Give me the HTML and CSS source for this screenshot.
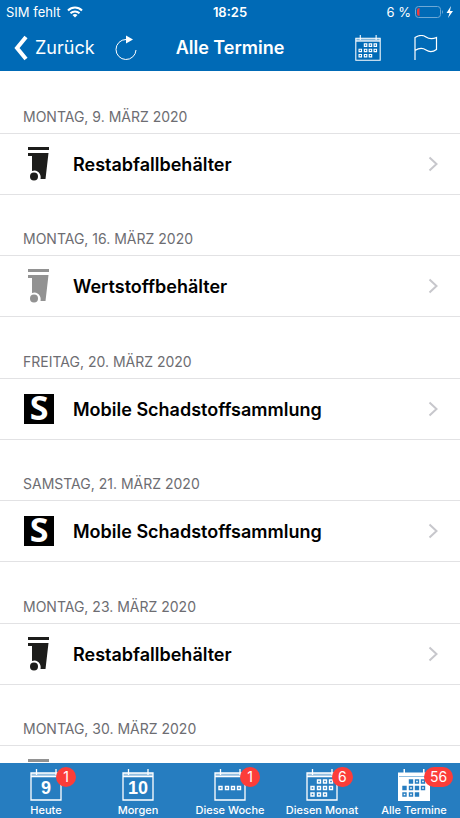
FILE: index.html
```html
<!DOCTYPE html>
<html lang="de">
<head>
    <meta charset="UTF-8">
    <meta name="viewport" content="width=device-width, initial-scale=1.0">
    <title>Alle Termine</title>
    <link rel="stylesheet" href="styles.css">
</head>
<body>
    <!-- shared shapes -->
    <svg class="sprite" aria-hidden="true">
        <symbol id="bin" viewBox="0 0 22 34">
            <path fill="currentColor" d="M0 0H21V3H0zM0 6H20.5L17.5 32H12.5C13.5 28 11 24 6.500 23.5L4 24V9H0z"/>
            <circle cx="6" cy="29.5" r="4" fill="currentColor"/>
        </symbol>
        <symbol id="next" viewBox="0 0 10 16">
            <path d="M1.5 1.5L8.5 8L1.5 14.5" fill="none" stroke="currentColor" stroke-width="2"/>
        </symbol>
        <symbol id="frame" viewBox="0 0 32 32">
            <path d="M1 4H31V31H1zM1 7.5H31M6.5 0V6M26 0V6" fill="none" stroke="currentColor" stroke-width="1.3"/>
            <path d="M1 4H31V8H1z" fill="currentColor" opacity="0.5"/>
        </symbol>
        <symbol id="days" viewBox="0 0 32 32">
            <path d="M11.5 11h3v3h-3zM17.5 11h3v3h-3zM23.5 11h3v3h-3zM5 17.5h3v3h-3zM11.5 17.5h3v3h-3zM17.5 17.5h3v3h-3zM23.5 17.5h3v3h-3zM5 24h3v3h-3zM11.5 24h3v3h-3zM17.5 24h3v3h-3z" fill="none" stroke="currentColor" stroke-width="1.4"/>
        </symbol>
    </svg>

    <header class="top">
        <div class="status">
            <div class="status-left">
                <span>SIM fehlt</span>
                <svg class="wifi" viewBox="0 0 16 12" fill="none" stroke="currentColor" stroke-width="2">
                    <path d="M1 4.5C5 0.5 11 0.5 15 4.5M3.5 7.2C6 4.8 10 4.8 12.5 7.2"/>
                    <path d="M5.5 9Q8 7 10.5 9L8 11.5z" fill="currentColor" stroke="none"/>
                </svg>
            </div>
            <span class="time">18:25</span>
            <div class="status-right">
                <span>6 %</span>
                <svg class="battery" viewBox="0 0 39 14">
                    <rect x="0.5" y="1.5" width="25" height="11" rx="3" fill="none" stroke="#6ea9d6"/>
                    <path d="M27 5Q29 7 27 9z" fill="#6ea9d6"/>
                    <path d="M4.5 3V11Q2 11 2 8.5V5.5Q2 3 4.5 3z" fill="#f03b3c"/>
                    <path d="M36 1L31.5 8H34.5L33 13L38 6H35z" fill="currentColor"/>
                </svg>
            </div>
        </div>
        <nav class="nav">
            <div class="nav-left">
                <button class="back">
                    <svg viewBox="0 0 14 26"><path d="M12 2L3 13L12 24" fill="none" stroke="currentColor" stroke-width="4"/></svg>
                    <span>Zurück</span>
                </button>
                <button class="icon-button" aria-label="Aktualisieren">
                    <svg class="reload" viewBox="0 0 22 26">
                        <path d="M11 4.5A10 10 0 1 0 21 15" fill="none" stroke="currentColor"/>
                        <path d="M11 0.5V8.5L18 4.5z" fill="currentColor"/>
                    </svg>
                </button>
            </div>
            <h1>Alle Termine</h1>
            <div class="nav-right">
                <button class="icon-button" aria-label="Kalender">
                    <svg class="calendar"><use href="#frame"/><use href="#days"/></svg>
                </button>
                <button class="icon-button" aria-label="Markieren">
                    <svg class="flag" viewBox="0 0 24 26">
                        <path d="M1 25V2.5C5 0 9 0 12 2C15 4 19 4 22.5 2.5V14.5C19 17 15 17 12 15C9 13 5 13 1 15.5" fill="none" stroke="currentColor" stroke-width="1.2"/>
                    </svg>
                </button>
            </div>
        </nav>
    </header>

    <main class="list">
        <section>
            <h2>MONTAG, 9. MÄRZ 2020</h2>
            <a class="row" href="#">
                <span class="icon"><svg class="bin"><use href="#bin"/></svg></span>
                <span class="name">Restabfallbehälter</span>
                <svg class="next"><use href="#next"/></svg>
            </a>
        </section>
        <section>
            <h2>MONTAG, 16. MÄRZ 2020</h2>
            <a class="row" href="#">
                <span class="icon"><svg class="bin grey"><use href="#bin"/></svg></span>
                <span class="name">Wertstoffbehälter</span>
                <svg class="next"><use href="#next"/></svg>
            </a>
        </section>
        <section>
            <h2>FREITAG, 20. MÄRZ 2020</h2>
            <a class="row" href="#">
                <span class="icon"><span class="mobile">S</span></span>
                <span class="name">Mobile Schadstoffsammlung</span>
                <svg class="next"><use href="#next"/></svg>
            </a>
        </section>
        <section>
            <h2>SAMSTAG, 21. MÄRZ 2020</h2>
            <a class="row" href="#">
                <span class="icon"><span class="mobile">S</span></span>
                <span class="name">Mobile Schadstoffsammlung</span>
                <svg class="next"><use href="#next"/></svg>
            </a>
        </section>
        <section>
            <h2>MONTAG, 23. MÄRZ 2020</h2>
            <a class="row" href="#">
                <span class="icon"><svg class="bin"><use href="#bin"/></svg></span>
                <span class="name">Restabfallbehälter</span>
                <svg class="next"><use href="#next"/></svg>
            </a>
        </section>
        <section>
            <h2>MONTAG, 30. MÄRZ 2020</h2>
            <a class="row" href="#">
                <span class="icon"><svg class="bin grey"><use href="#bin"/></svg></span>
            </a>
        </section>
    </main>

    <footer class="tabs">
        <button class="tab">
            <span class="tab-icon">
                <svg><use href="#frame"/></svg>
                <span class="day">9</span>
                <span class="badge">1</span>
            </span>
            <span>Heute</span>
        </button>
        <button class="tab">
            <span class="tab-icon">
                <svg><use href="#frame"/></svg>
                <span class="day">10</span>
            </span>
            <span>Morgen</span>
        </button>
        <button class="tab">
            <span class="tab-icon">
                <svg viewBox="0 0 32 32">
                    <use href="#frame"/>
                    <path d="M5 17.5h3v3h-3zM11.5 17.5h3v3h-3zM17.5 17.5h3v3h-3zM23.5 17.5h3v3h-3z" fill="none" stroke="currentColor" stroke-width="1.4"/>
                </svg>
                <span class="badge">1</span>
            </span>
            <span>Diese Woche</span>
        </button>
        <button class="tab">
            <span class="tab-icon">
                <svg><use href="#frame"/><use href="#days"/></svg>
                <span class="badge">6</span>
            </span>
            <span>Diesen Monat</span>
        </button>
        <button class="tab">
            <span class="tab-icon">
                <svg viewBox="0 0 32 32">
                    <path d="M0 3.5H32V32H0zM5.5 0H7V5H5.5zM25 0H26.5V5H25z" fill="currentColor"/>
                    <path d="M1 7.5H31" stroke="#8fbde0"/>
                    <g fill="none" stroke="#267dc0" stroke-width="1.4">
                        <path d="M17.5 11h3v3h-3zM23.5 11h3v3h-3zM11.5 17.5h3v3h-3zM23.5 17.5h3v3h-3zM5 24h3v3h-3zM11.5 24h3v3h-3z"/>
                        <path d="M11.5 11h3v3h-3zM5 17.5h3v3h-3zM17.5 17.5h3v3h-3zM17.5 24h3v3h-3z" fill="#267dc0"/>
                    </g>
                </svg>
                <span class="badge">56</span>
            </span>
            <span>Alle Termine</span>
        </button>
    </footer>
</body>
</html>
```
FILE: styles.css
```css
* {
    box-sizing: border-box;
}
body {
    display: flex;
    flex-direction: column;
    height: 100vh;
    margin: 0;
    font-family: Inter, "Liberation Sans", sans-serif;
    color: #000;
    background-color: #fff;
}
svg {
    display: block;
}
button {
    padding: 0;
    border: none;
    background: none;
    color: inherit;
    font: inherit;
    cursor: pointer;
}
.sprite {
    position: absolute;
    width: 0;
    height: 0;
}

/* top bar */
.top {
    flex: none;
    color: #fff;
    background-color: #006ab6;
}
.status {
    display: grid;
    grid-template-columns: 1fr auto 1fr;
    align-items: center;
    height: 24px;
    padding: 0 6px;
    font-size: 13px;
}
.status-left,
.status-right {
    display: flex;
    align-items: center;
    gap: 6px;
}
.status-right {
    justify-content: flex-end;
    gap: 4px;
}
.wifi {
    width: 16px;
    height: 12px;
}
.time {
    font-weight: 600;
}
.battery {
    width: 39px;
    height: 14px;
}
.nav {
    display: grid;
    grid-template-columns: 1fr auto 1fr;
    align-items: center;
    height: 47px;
    padding: 0 14px;
}
.nav-left,
.nav-right {
    display: flex;
    align-items: center;
    gap: 20px;
}
.nav-right {
    justify-content: flex-end;
    gap: 33px;
    padding-right: 8px;
}
.back {
    display: flex;
    align-items: center;
    gap: 7px;
    font-size: 18px;
}
.back svg {
    width: 14px;
    height: 26px;
}
.reload {
    width: 22px;
    height: 26px;
}
.calendar {
    width: 26px;
    height: 26px;
}
.flag {
    width: 24px;
    height: 26px;
}
h1 {
    margin: 0;
    font-size: 18px;
    font-weight: 600;
}

/* list of dates */
.list {
    flex: 1;
    min-height: 0;
    padding-top: 2px;
    overflow-y: auto;
    scrollbar-width: none;
}
section:nth-child(even) {
    padding-bottom: 1px;
}
h2 {
    display: flex;
    align-items: flex-end;
    height: 60px;
    margin: 0;
    padding: 0 23px 7px;
    font-size: 14px;
    line-height: 18px;
    font-weight: 400;
    color: #6d6d72;
}
.row {
    display: flex;
    align-items: center;
    height: 62px;
    padding: 0 22px 0 23px;
    border: solid #e2e2e4;
    border-width: 1px 0;
    color: inherit;
    text-decoration: none;
}
.icon {
    display: flex;
    justify-content: center;
    width: 32px;
    margin-right: 18px;
}
.bin {
    width: 22px;
    height: 34px;
    color: #1d1d1b;
}
.grey {
    color: #929292;
}
.mobile {
    display: flex;
    align-items: center;
    justify-content: center;
    width: 30px;
    height: 30px;
    padding-bottom: 4px;
    background-color: #000;
    color: #fff;
    font: bold 34px/30px "Open Sans", sans-serif;
}
.name {
    flex: 1;
    font-size: 18px;
    font-weight: 600;
}
.next {
    width: 10px;
    height: 16px;
    color: #c7c7cc;
}

/* tab bar */
.tabs {
    flex: none;
    display: grid;
    grid-template-columns: repeat(5, 1fr);
    height: 55px;
    color: #fff;
    background-color: #267dc0;
}
.tab {
    display: flex;
    flex-direction: column;
    align-items: center;
    gap: 2px;
    padding-top: 6px;
    font-size: 11px;
    line-height: 14px;
    font-weight: 500;
    white-space: nowrap;
}
.tab-icon {
    position: relative;
}
.tab-icon svg {
    width: 32px;
    height: 32px;
}
.day {
    position: absolute;
    top: 9px;
    left: 0;
    width: 100%;
    font: bold 18px/20px "Liberation Sans", sans-serif;
    text-align: center;
}
.badge {
    position: absolute;
    top: -2px;
    left: 26px;
    min-width: 20px;
    padding: 0 6px;
    border-radius: 10px;
    background-color: #fc3d39;
    font-size: 14px;
    line-height: 20px;
    font-weight: 400;
}
```
